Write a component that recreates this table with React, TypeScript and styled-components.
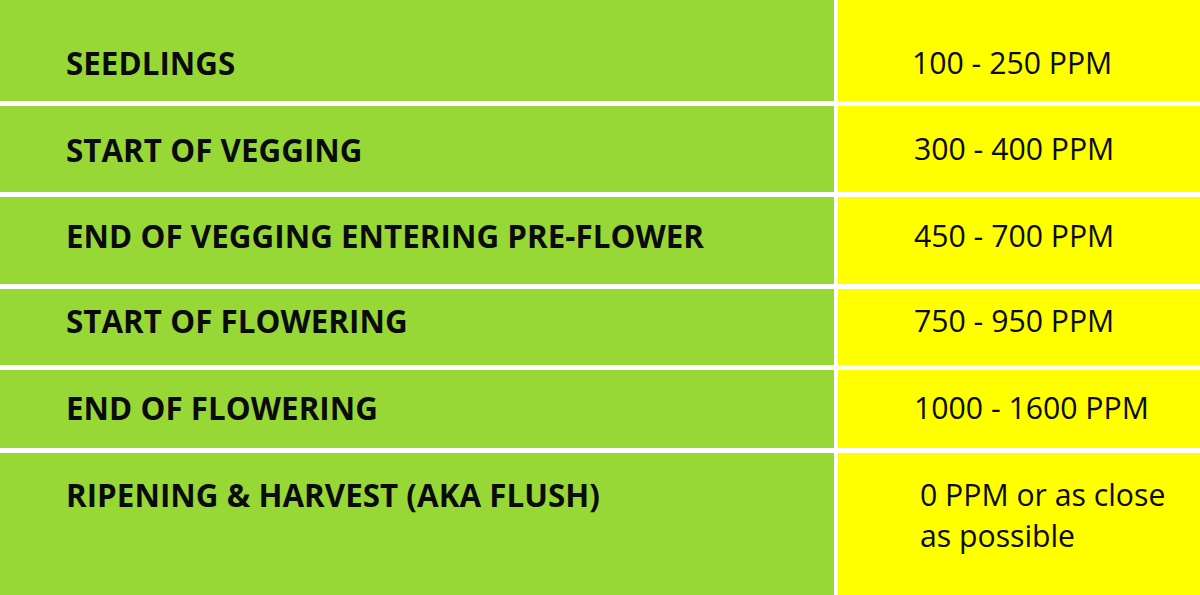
import React from "react";
import styled, { createGlobalStyle } from "styled-components";

const GlobalStyle = createGlobalStyle`
  html, body { margin: 0; padding: 0; background: #ffffff; }
  body { font-family: "Open Sans", "Liberation Sans", sans-serif; color: #0b0b0b; }
  #root { width: 1200px; height: 595px; overflow: hidden; }
`;

const Table = styled.div<{ $rows: string }>`
  display: grid;
  grid-template-columns: 834px 1fr;
  grid-template-rows: ${(p) => p.$rows};
  column-gap: 4px;
  row-gap: 5px;
  width: 1200px;
  height: 595px;
  background: #ffffff;
`;

const StageCell = styled.div<{ $top: number }>`
  background: #98d836;
  padding: ${(p) => p.$top}px 0 0 66px;
  box-sizing: border-box;
`;

const StageLabel = styled.span`
  display: block;
  font-family: "Open Sans", "Liberation Sans", sans-serif;
  font-weight: 700;
  font-size: 31.3px;
  line-height: 1;
  letter-spacing: 0.05px;
  white-space: nowrap;
  text-transform: uppercase;
`;

const PpmCell = styled.div<{ $top: number; $left: number }>`
  background: #ffff00;
  padding: ${(p) => p.$top}px 0 0 ${(p) => p.$left}px;
  box-sizing: border-box;
`;

const PpmValue = styled.span`
  display: block;
  font-family: "Open Sans", "Liberation Sans", sans-serif;
  font-weight: 400;
  font-size: 30.2px;
  line-height: 41px;
  max-width: 250px;
`;

type Stage = {
  stage: string;
  ppm: string;
  height: number;
  labelTop: number;
  valueTop: number;
  valueLeft: number;
};

const stages: Stage[] = [
  { stage: "SEEDLINGS", ppm: "100 - 250 PPM", height: 101, labelTop: 47.5, valueTop: 42, valueLeft: 74 },
  { stage: "START OF VEGGING", ppm: "300 - 400 PPM", height: 86, labelTop: 28.5, valueTop: 22, valueLeft: 76 },
  { stage: "END OF VEGGING ENTERING PRE-FLOWER", ppm: "450 - 700 PPM", height: 87, labelTop: 23.5, valueTop: 18, valueLeft: 76 },
  { stage: "START OF FLOWERING", ppm: "750 - 950 PPM", height: 76, labelTop: 16.5, valueTop: 11, valueLeft: 76 },
  { stage: "END OF FLOWERING", ppm: "1000 - 1600 PPM", height: 78, labelTop: 22.5, valueTop: 17, valueLeft: 76 },
  { stage: "RIPENING & HARVEST (AKA FLUSH)", ppm: "0 PPM or as close as possible", height: 142, labelTop: 26.5, valueTop: 21, valueLeft: 82 },
];

export default function App() {
  const rows = stages.map((s) => `${s.height}px`).join(" ");
  return (
    <>
      <GlobalStyle />
      <Table $rows={rows}>
        {stages.map((s) => (
          <React.Fragment key={s.stage}>
            <StageCell $top={s.labelTop}>
              <StageLabel>{s.stage}</StageLabel>
            </StageCell>
            <PpmCell $top={s.valueTop} $left={s.valueLeft}>
              <PpmValue>{s.ppm}</PpmValue>
            </PpmCell>
          </React.Fragment>
        ))}
      </Table>
    </>
  );
}
